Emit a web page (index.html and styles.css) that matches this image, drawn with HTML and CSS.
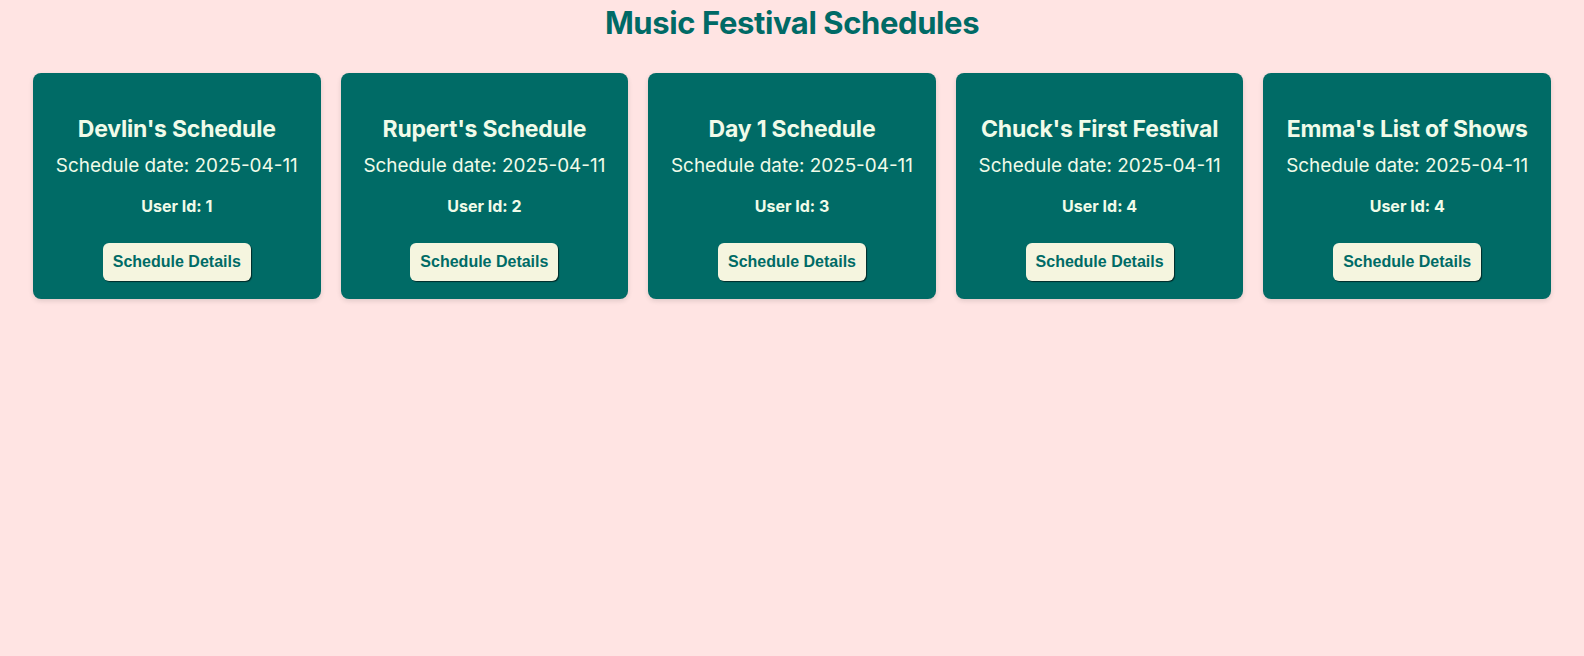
FILE: index.html
```html
<!DOCTYPE html>
<html>
<head>
<meta charset="utf-8">
<link rel="stylesheet" href="styles.css">
</head>
<body>
<h1 class="title">Music Festival Schedules</h1>
<div class="grid">
  <div class="card">
    <h2 class="card-title">Devlin's Schedule</h2>
    <p class="date">Schedule date: 2025-04-11</p>
    <p class="user">User Id: 1</p>
    <button class="btn">Schedule Details</button>
  </div>
  <div class="card">
    <h2 class="card-title">Rupert's Schedule</h2>
    <p class="date">Schedule date: 2025-04-11</p>
    <p class="user">User Id: 2</p>
    <button class="btn">Schedule Details</button>
  </div>
  <div class="card">
    <h2 class="card-title">Day 1 Schedule</h2>
    <p class="date">Schedule date: 2025-04-11</p>
    <p class="user">User Id: 3</p>
    <button class="btn">Schedule Details</button>
  </div>
  <div class="card">
    <h2 class="card-title">Chuck's First Festival</h2>
    <p class="date">Schedule date: 2025-04-11</p>
    <p class="user">User Id: 4</p>
    <button class="btn">Schedule Details</button>
  </div>
  <div class="card">
    <h2 class="card-title">Emma's List of Shows</h2>
    <p class="date">Schedule date: 2025-04-11</p>
    <p class="user">User Id: 4</p>
    <button class="btn">Schedule Details</button>
  </div>
</div>
</body>
</html>
```
FILE: styles.css
```css
html, body {
  margin: 0;
  padding: 0;
  background: #ffe4e3;
  font-family: Inter, "Noto Sans", sans-serif;
  height: 100%;
}
.title {
  margin: 5px 0 0;
  text-align: center;
  font-size: 31px;
  letter-spacing: -0.4px;
  font-weight: 700;
  color: #006a66;
  line-height: 36px;
}
.grid {
  display: grid;
  grid-template-columns: repeat(5, 1fr);
  gap: 20px;
  padding: 32px 33px 0 33px;
}
.card {
  background: #006b66;
  border-radius: 8px;
  box-shadow: 0 2px 5px rgba(0, 0, 0, 0.12);
  padding: 42px 12px 18px;
  text-align: center;
  color: #f0fbe9;
}
.card-title {
  margin: 0 0 11px;
  font-size: 23px;
  letter-spacing: -0.2px;
  font-weight: 700;
  line-height: 29px;
}
.date {
  margin: 0 0 20px;
  font-size: 18.9px;
  line-height: 22px;
}
.user {
  margin: 0 0 27px;
  font-size: 16px;
  font-weight: 700;
  line-height: 19px;
}
.btn {
  font-family: "Liberation Sans", Arial, sans-serif;
  font-weight: 700;
  font-size: 16px;
  line-height: 18px;
  color: #006b66;
  background: #f5f5df;
  border: none;
  border-radius: 6px;
  padding: 10px 10px;
  box-shadow: 1px 1px 1px rgba(0, 0, 0, 0.6);
  cursor: pointer;
}
```
